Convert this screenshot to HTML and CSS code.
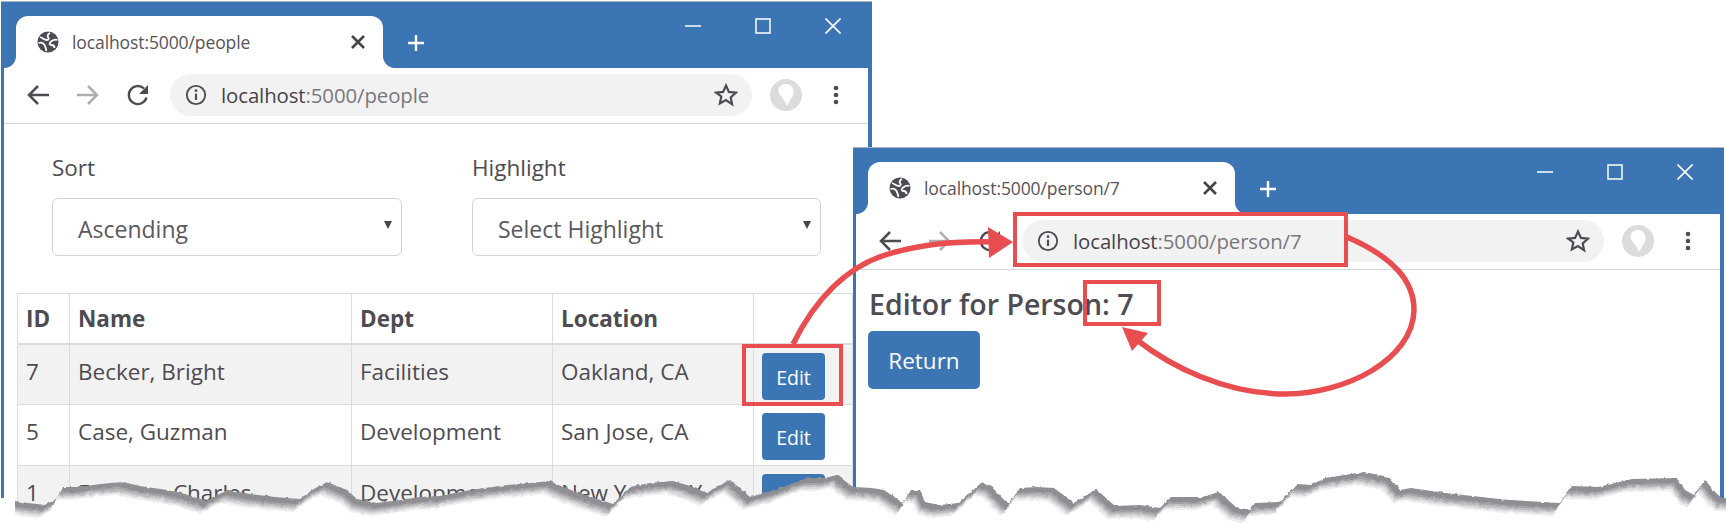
FILE: index.html
```html
<!DOCTYPE html>
<html lang="en">
<head>
<meta charset="utf-8">
<title>localhost:5000</title>
<link rel="stylesheet" href="styles.css">
</head>
<body>
<svg class="defs" width="0" height="0" aria-hidden="true">
  <defs>
    <symbol id="i-globe" viewBox="0 0 22 22">
      <circle cx="11" cy="11" r="10.5" fill="#4e4b52"/>
      <path d="M3 6c3 1 4 3 7 3 2 0 2-2 1-3-1-1 0-3 2-4M1.500 12c3-1 5 0 6 2 .8 2 2 3 1.500 6M20.500 9c-3-1-5 0-7 2-1.500 2-1 3 1 3 2 0 3 1 3 3" fill="none" stroke="#fff" stroke-width="1.800"/>
    </symbol>
    <symbol id="i-x" viewBox="0 0 16 16"><path d="M2 2l12 12M14 2L2 14" fill="none" stroke="currentColor" stroke-width="2.600"/></symbol>
    <symbol id="i-plus" viewBox="0 0 18 18"><path d="M9 1v16M1 9h16" fill="none" stroke="#fff" stroke-width="2.400"/></symbol>
    <symbol id="i-min" viewBox="0 0 16 16"><path d="M0 8h16" stroke="#fff" stroke-width="1.500"/></symbol>
    <symbol id="i-max" viewBox="0 0 16 16"><rect x="1" y="1" width="14" height="14" fill="none" stroke="#fff" stroke-width="1.500"/></symbol>
    <symbol id="i-close" viewBox="0 0 16 16"><path d="M.5 .5l15 15M15.500 .5l-15 15" fill="none" stroke="#fff" stroke-width="1.600"/></symbol>
    <symbol id="i-back" viewBox="0 0 24 24"><path d="M23 12H3M12 3l-9 9 9 9" fill="none" stroke="currentColor" stroke-width="2.500"/></symbol>
    <symbol id="i-fwd" viewBox="0 0 24 24"><path d="M1 12h20M12 3l9 9-9 9" fill="none" stroke="currentColor" stroke-width="2.500"/></symbol>
    <symbol id="i-reload" viewBox="0 0 24 24"><path d="M20.500 14.500a9 9 0 1 1-2.500-9" fill="none" stroke="currentColor" stroke-width="2.400"/><path d="M22 2v9h-9z" fill="currentColor"/></symbol>
    <symbol id="i-info" viewBox="0 0 24 24"><circle cx="12" cy="12" r="10" fill="none" stroke="currentColor" stroke-width="2"/><path d="M12 10.500v7" stroke="currentColor" stroke-width="2.400"/><circle cx="12" cy="7.300" r="1.500" fill="currentColor"/></symbol>
    <symbol id="i-star" viewBox="0 0 24 24"><path d="M12 2.500l2.900 6.400 7 .8-5.200 4.700 1.400 6.900L12 17l-6.100 3.300 1.400-6.900L2.100 9.700l7-.8z" fill="none" stroke="currentColor" stroke-width="2.200"/></symbol>
    <symbol id="i-avatar" viewBox="0 0 32 32"><circle cx="16" cy="16" r="16" fill="#dcdbdd"/><path d="M16 5c5 0 8 4 7.500 9-.4 4-3.500 7-4.500 9.500-.6 1.800-1.500 3-2.500 3.500-.2-3-1.500-4-3-6.500C11.500 17 8 15 8.500 11 9 7.500 12 5 16 5z" fill="#fff"/></symbol>
    <symbol id="i-menu" viewBox="0 0 24 24"><circle cx="12" cy="5" r="2.300" fill="currentColor"/><circle cx="12" cy="12" r="2.300" fill="currentColor"/><circle cx="12" cy="19" r="2.300" fill="currentColor"/></symbol>
    <polygon id="edge" points="-30,500 10,500 15,501 28,503 45,505 58,498 63,487 80,487 100,484 123,482 140,486 167,490 185,494 207,501 215,496 228,490 250,494 275,497 300,499 312,490 327,482 347,490 357,499 377,503 400,500 420,497 440,496 470,490 507,485 530,483 550,481 563,487 585,495 613,504 622,495 630,487 650,483 673,481 690,486 707,493 718,486 730,480 742,490 750,497 775,490 807,478 825,478 837,475 853,487 872,488 884,490 903,503 911,490 920,490 925,502 939,505 959,503 981,483 990,485 1006,502 1009,503 1020,488 1037,487 1054,488 1074,503 1096,489 1115,506 1140,505 1160,508 1171,497 1202,497 1219,492 1236,507 1250,510 1255,503 1280,502 1297,484 1311,485 1325,478 1364,472 1389,477 1400,490 1411,488 1445,493 1509,500 1560,503 1571,486 1599,487 1632,479 1677,478 1685,490 1694,495 1705,480 1716,493 1722,498 1760,499 1760,560 -30,560"/>
    <filter id="rough" x="-2%" y="-20%" width="104%" height="140%">
      <feTurbulence type="fractalNoise" baseFrequency="0.2" numOctaves="2" seed="4"/>
      <feDisplacementMap in="SourceGraphic" scale="3" xChannelSelector="R" yChannelSelector="G"/>
    </filter>
  </defs>
</svg>

<section class="window window-people">
  <header class="tabstrip">
    <div class="tab">
      <svg class="globe"><use href="#i-globe"/></svg>
      <span class="tab-title">localhost:5000/people</span>
      <svg class="tab-close"><use href="#i-x"/></svg>
    </div>
    <svg class="new-tab"><use href="#i-plus"/></svg>
    <div class="controls">
      <svg class="ctl"><use href="#i-min"/></svg>
      <svg class="ctl"><use href="#i-max"/></svg>
      <svg class="ctl"><use href="#i-close"/></svg>
    </div>
  </header>
  <nav class="toolbar">
    <svg class="nav"><use href="#i-back"/></svg>
    <svg class="nav nav-off"><use href="#i-fwd"/></svg>
    <svg class="nav"><use href="#i-reload"/></svg>
    <div class="omnibox">
      <svg class="info"><use href="#i-info"/></svg>
      <span class="url"><b>localhost</b>:5000/people</span>
      <svg class="star"><use href="#i-star"/></svg>
    </div>
    <svg class="avatar"><use href="#i-avatar"/></svg>
    <svg class="menu"><use href="#i-menu"/></svg>
  </nav>
  <main class="content">
    <div class="filters">
      <div class="field">
        <div class="label">Sort</div>
        <div class="select">Ascending<span class="caret"></span></div>
      </div>
      <div class="field">
        <div class="label">Highlight</div>
        <div class="select">Select Highlight<span class="caret"></span></div>
      </div>
    </div>
    <table class="people">
      <colgroup><col class="c-id"><col class="c-name"><col class="c-dept"><col class="c-loc"><col class="c-act"></colgroup>
      <thead><tr><th>ID</th><th>Name</th><th>Dept</th><th>Location</th><th></th></tr></thead>
      <tbody>
        <tr class="odd"><td>7</td><td>Becker, Bright</td><td>Facilities</td><td>Oakland, CA</td><td class="act"><span class="btn btn-sm">Edit</span></td></tr>
        <tr><td>5</td><td>Case, Guzman</td><td>Development</td><td>San Jose, CA</td><td class="act"><span class="btn btn-sm">Edit</span></td></tr>
        <tr class="odd"><td>1</td><td>Fuentes, Charles</td><td>Development</td><td>New York, NY</td><td class="act"><span class="btn btn-sm">Edit</span></td></tr>
      </tbody>
    </table>
  </main>
</section>

<section class="window window-person">
  <header class="tabstrip">
    <div class="tab">
      <svg class="globe"><use href="#i-globe"/></svg>
      <span class="tab-title">localhost:5000/person/7</span>
      <svg class="tab-close"><use href="#i-x"/></svg>
    </div>
    <svg class="new-tab"><use href="#i-plus"/></svg>
    <div class="controls">
      <svg class="ctl"><use href="#i-min"/></svg>
      <svg class="ctl"><use href="#i-max"/></svg>
      <svg class="ctl"><use href="#i-close"/></svg>
    </div>
  </header>
  <nav class="toolbar">
    <svg class="nav"><use href="#i-back"/></svg>
    <svg class="nav nav-off"><use href="#i-fwd"/></svg>
    <svg class="nav"><use href="#i-reload"/></svg>
    <div class="omnibox">
      <svg class="info"><use href="#i-info"/></svg>
      <span class="url"><b>localhost</b>:5000/person/7</span>
      <svg class="star"><use href="#i-star"/></svg>
    </div>
    <svg class="avatar"><use href="#i-avatar"/></svg>
    <svg class="menu"><use href="#i-menu"/></svg>
  </nav>
  <main class="content editor">
    <h1 class="title">Editor for Person: 7</h1>
    <span class="btn btn-lg">Return</span>
  </main>
</section>

<div class="mark mark-edit"></div>
<div class="mark mark-url"></div>
<div class="mark mark-id"></div>

<svg class="overlay" viewBox="0 0 1726 525" aria-hidden="true">
  <path class="arrow" d="M793 344C815 300 845 268 885 255C920 244 960 241 995 242"/>
  <path class="head" d="M1013 242L988 227L989 258Z"/>
  <path class="arrow" d="M1347 237C1395 258 1414 282 1414 310C1413 360 1345 394 1285 394C1225 394 1170 366 1137 340"/>
  <path class="head" d="M1122 327L1148 333L1132 351Z"/>
  <g filter="url(#rough)">
    <use href="#edge" fill="#8e8e93"/>
    <use href="#edge" fill="#a4a4a8" transform="translate(-3 5)"/>
    <use href="#edge" fill="#bebec1" transform="translate(-4 7)"/>
    <use href="#edge" fill="#d8d8da" transform="translate(-5 9)"/>
    <use href="#edge" fill="#eeeeef" transform="translate(-6 11)"/>
    <use href="#edge" fill="#ffffff" transform="translate(-7 13)"/>
  </g>
  <rect x="0" y="498" width="15" height="27" fill="#fff"/>
</svg>
```

FILE: styles.css
```css
* { box-sizing: border-box; }
html, body { margin: 0; height: 525px; }
body {
  position: relative;
  width: 1726px;
  overflow: hidden;
  background: #fff;
  font-family: "Open Sans", "Noto Sans", sans-serif;
  color: #4e4b52;
}
.defs { position: absolute; }

/* browser window */
.window {
  position: absolute;
  width: 871px;
  display: flex;
  flex-direction: column;
  background: #3b75b4;
  border-top: 1px solid #a9b4c0;
  padding: 0 4px 0 3px;
}
.window-people { left: 1px; top: 1px; height: 500px; }
.window-person { left: 853px; top: 147px; height: 354px; }

.tabstrip { display: flex; height: 66px; flex: none; }
.tab {
  position: relative;
  display: flex;
  align-items: center;
  width: 367px;
  height: 52px;
  margin: 14px 0 0 12px;
  padding: 0 17px 0 21px;
  background: #fff;
  border-radius: 12px 12px 0 0;
}
.tab::before, .tab::after {
  content: "";
  position: absolute;
  bottom: 0;
  width: 12px;
  height: 12px;
}
.tab::before { left: -12px; background: radial-gradient(circle at 0 0, #3b75b4 11.500px, #fff 12.500px); }
.tab::after { right: -12px; background: radial-gradient(circle at 100% 0, #3b75b4 11.500px, #fff 12.500px); }
.globe { width: 22px; height: 22px; flex: none; }
.tab-title { margin-left: 13px; font-size: 17.500px; letter-spacing: -.1px; color: #56535a; }
.tab-close { width: 16px; height: 16px; margin-left: auto; color: #46434a; flex: none; }
.new-tab { width: 18px; height: 18px; margin: 32px 0 0 24px; flex: none; }
.controls { display: flex; gap: 54px; margin: 16px 27px 0 auto; }
.ctl { width: 16px; height: 16px; }

.toolbar {
  display: flex;
  align-items: center;
  flex: none;
  height: 56px;
  padding: 0 0 1px 22px;
  background: #fff;
  border-bottom: 1px solid #d6d6d6;
  color: #4e4b52;
}
.nav { width: 24px; height: 24px; margin-right: 26px; flex: none; }
.nav-off { color: #aeadb2; }
.omnibox {
  display: flex;
  align-items: center;
  flex: none;
  width: 582px;
  height: 42px;
  margin-left: -6px;
  padding: 0 14px 0 15px;
  border-radius: 21px;
  background: #f2f2f3;
}
.info { width: 22px; height: 22px; flex: none; }
.url { margin-left: 14px; font-size: 20.400px; color: #79777d; letter-spacing: -.1px; }
.url b { font-weight: 400; color: #45424a; }
.star { width: 24px; height: 24px; margin-left: auto; flex: none; }
.avatar { width: 32px; height: 32px; margin-left: 18px; flex: none; }
.menu { width: 24px; height: 24px; margin-left: 22px; flex: none; }

.content { flex: 1; background: #fff; }

/* filters */
.filters { display: grid; grid-template-columns: 350px 349px; column-gap: 70px; padding: 29px 0 0 48px; }
.label { height: 30px; line-height: 30px; font-size: 22.500px; }
.select {
  position: relative;
  height: 58px;
  margin-top: 15px;
  padding-left: 25px;
  border: 1px solid #d3d3d5;
  border-radius: 6px;
  line-height: 60px;
  font-size: 23px;
  color: #5b5860;
}
.caret {
  position: absolute;
  right: 9px;
  top: 22px;
  border: 4.500px solid transparent;
  border-top: 8px solid #47444b;
  border-bottom: 0;
}

/* table */
.people {
  width: 835px;
  margin: 37px 0 0 13px;
  border-collapse: collapse;
  table-layout: fixed;
  font-size: 22.500px;
}
.c-id { width: 52px; }
.c-name { width: 282px; }
.c-dept { width: 201px; }
.c-loc { width: 201px; }
.c-act { width: 99px; }
.people th, .people td {
  border: 1px solid #dcdcde;
  padding: 0 0 0 8px;
  text-align: left;
  white-space: nowrap;
  overflow: hidden;
}
.people th { height: 50px; font-weight: 700; border-bottom-width: 2px; }
.people td { height: 61px; vertical-align: top; padding-top: 10px; line-height: 34px; }
.people .odd td { background: #f2f2f3; }
.people td.act { padding: 8px 0 0 8px; }

.btn {
  display: inline-flex;
  align-items: center;
  justify-content: center;
  background: #3b75b4;
  color: #fff;
}
.btn-sm { width: 63px; height: 47px; border-radius: 4px; font-size: 19.500px; padding-top: 3px; line-height: 1; }
.btn-lg { width: 112px; height: 58px; margin-left: 1px; border-radius: 5px; font-size: 22.500px; }

/* editor */
.editor { padding: 0 0 0 11px; }
.title { margin: 12px 0 4px 2px; font-size: 28.500px; line-height: 45px; font-weight: 600; }

/* annotations */
.mark { position: absolute; border: 4px solid #e84e50; }
.mark-edit { left: 742px; top: 344px; width: 101px; height: 62px; }
.mark-url { left: 1013px; top: 212px; width: 335px; height: 55px; }
.mark-id { left: 1083px; top: 280px; width: 78px; height: 46px; }

.overlay { position: absolute; left: 0; top: 0; width: 1726px; height: 525px; pointer-events: none; }
.arrow { fill: none; stroke: #e84e50; stroke-width: 5.500; }
.head { fill: #e84e50; }
```
